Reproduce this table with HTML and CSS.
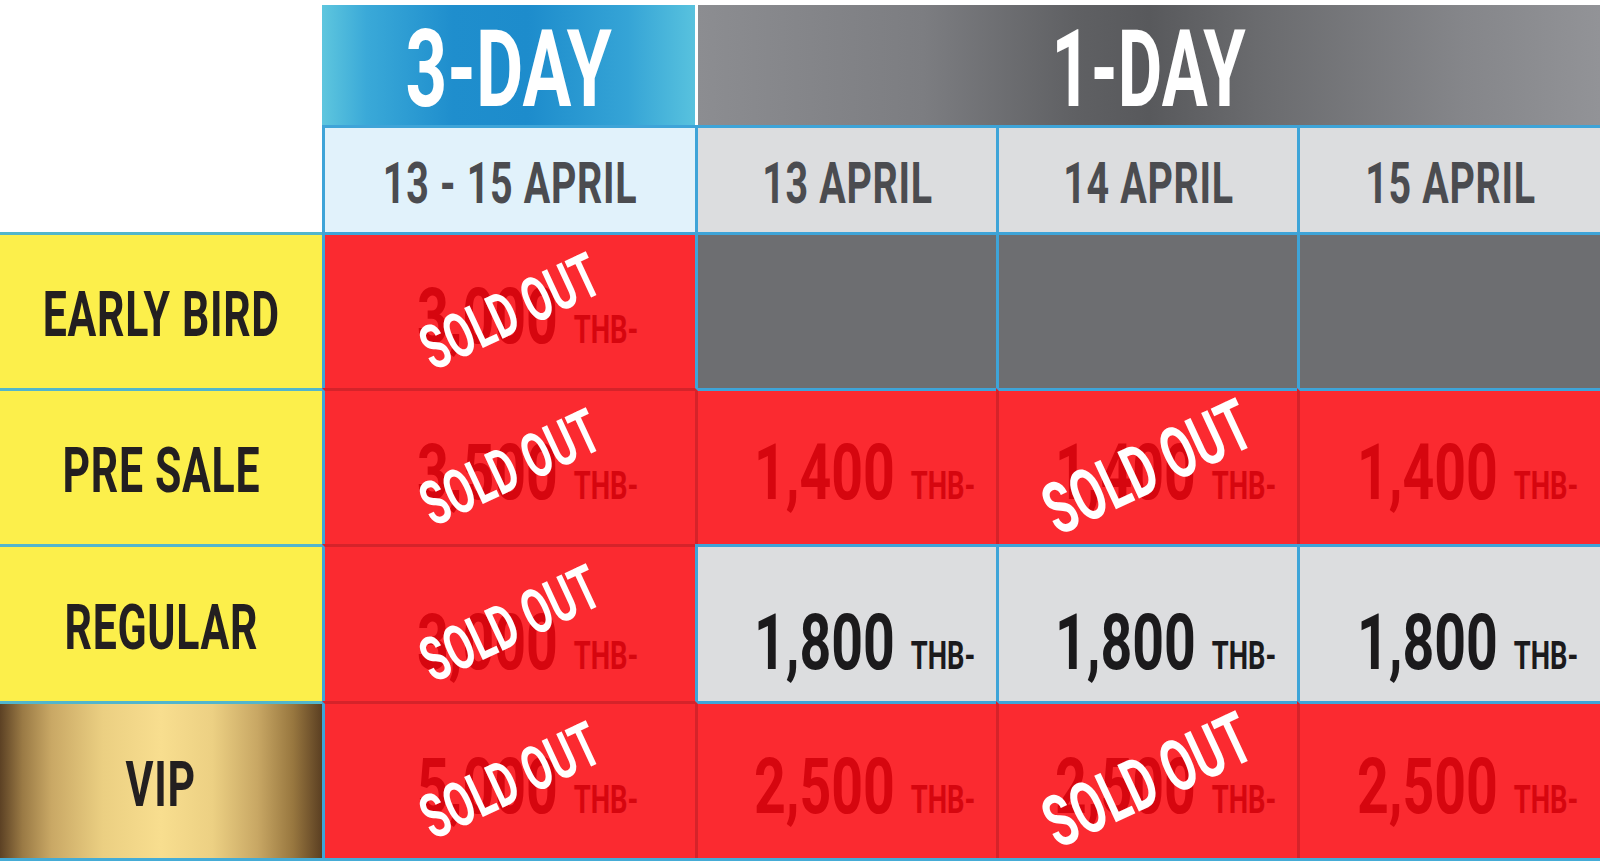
FILE: index.html
```html
<!DOCTYPE html>
<html lang="en">
<head>
  <meta charset="UTF-8">
  <meta name="viewport" content="width=device-width, initial-scale=1.0">
  <title>Ticket Prices</title>
  <link rel="stylesheet" href="styles.css">
</head>
<body>
  <div class="board">
    <!-- header -->
    <div class="corner"></div>
    <div class="head head-three"><span class="sq sq-head">3-DAY</span></div>
    <div class="head head-one"><span class="sq sq-head sq-one">1-DAY</span></div>

    <!-- dates -->
    <div class="corner"></div>
    <div class="date date-three"><span class="sq sq-date">13 - 15 APRIL</span></div>
    <div class="date"><span class="sq sq-date">13 APRIL</span></div>
    <div class="date"><span class="sq sq-date">14 APRIL</span></div>
    <div class="date"><span class="sq sq-date">15 APRIL</span></div>

    <!-- early bird -->
    <div class="label yellow"><span class="sq sq-label">EARLY BIRD</span></div>
    <div class="cell red">
      <span class="price"><span class="amt">3,000</span><span class="thb">THB-</span></span>
      <div class="stamp"><span class="stamp-text">SOLD OUT</span></div>
    </div>
    <div class="cell gray"></div>
    <div class="cell gray"></div>
    <div class="cell gray"></div>

    <!-- pre sale -->
    <div class="label yellow"><span class="sq sq-label">PRE SALE</span></div>
    <div class="cell red jt">
      <span class="price"><span class="amt">3,500</span><span class="thb">THB-</span></span>
      <div class="stamp"><span class="stamp-text">SOLD OUT</span></div>
    </div>
    <div class="cell red jl">
      <span class="price"><span class="amt">1,400</span><span class="thb">THB-</span></span>
    </div>
    <div class="cell red jl">
      <span class="price"><span class="amt">1,400</span><span class="thb">THB-</span></span>
      <div class="stamp"><span class="stamp-text big">SOLD OUT</span></div>
    </div>
    <div class="cell red jl">
      <span class="price"><span class="amt">1,400</span><span class="thb">THB-</span></span>
    </div>

    <!-- regular -->
    <div class="label yellow"><span class="sq sq-label">REGULAR</span></div>
    <div class="cell red jt low">
      <span class="price"><span class="amt">3,000</span><span class="thb">THB-</span></span>
      <div class="stamp"><span class="stamp-text">SOLD OUT</span></div>
    </div>
    <div class="cell light low">
      <span class="price"><span class="amt">1,800</span><span class="thb">THB-</span></span>
    </div>
    <div class="cell light low">
      <span class="price"><span class="amt">1,800</span><span class="thb">THB-</span></span>
    </div>
    <div class="cell light low">
      <span class="price"><span class="amt">1,800</span><span class="thb">THB-</span></span>
    </div>

    <!-- vip -->
    <div class="label gold"><span class="sq sq-label">VIP</span></div>
    <div class="cell red jt">
      <span class="price"><span class="amt">5,000</span><span class="thb">THB-</span></span>
      <div class="stamp"><span class="stamp-text">SOLD OUT</span></div>
    </div>
    <div class="cell red jl">
      <span class="price"><span class="amt">2,500</span><span class="thb">THB-</span></span>
    </div>
    <div class="cell red jl">
      <span class="price"><span class="amt">2,500</span><span class="thb">THB-</span></span>
      <div class="stamp"><span class="stamp-text big">SOLD OUT</span></div>
    </div>
    <div class="cell red jl">
      <span class="price"><span class="amt">2,500</span><span class="thb">THB-</span></span>
    </div>
  </div>
</body>
</html>
```

FILE: styles.css
```css
html, body {
  margin: 0;
  padding: 0;
  background: #ffffff;
}

body {
  padding-top: 5px;
  font-family: Roboto, "Liberation Sans", sans-serif;
  font-weight: 700;
  overflow: hidden;
}

.board {
  display: grid;
  grid-template-columns: 322px 373px 301px 301px 303px;
  grid-template-rows: 120px 107px 156px 156px 157px 157px;
  width: 1600px;
  border-bottom: 3px solid #45acd6;
}

.board > div {
  box-sizing: border-box;
  display: flex;
  align-items: center;
  justify-content: center;
  line-height: 1;
  white-space: nowrap;
}

.sq {
  display: inline-block;
}

/* header */
.head {
  color: #ffffff;
}

.head-three {
  background: linear-gradient(90deg, #5ec6de 0%, #3aa9d8 12%, #1f8ecd 35%, #1d8ccc 55%, #35a4d6 82%, #58c2de 100%);
}

.head-one {
  grid-column: span 3;
  border-left: 3px solid #ffffff;
  background: linear-gradient(90deg, #8c8d91 0%, #7c7d81 25%, #5f6063 42%, #58595c 50%, #6a6b6e 62%, #85868a 85%, #929397 100%);
}

.sq-head {
  font-size: 107px;
  transform: scaleX(0.68);
  padding-top: 8px;
}

.sq-one {
  transform: scaleX(0.64);
}

/* dates */
.date {
  background: #dcdddf;
  color: #4b4c50;
  border-top: 3px solid #3ea4d8;
  border-left: 3px solid #3ea4d8;
}

.date-three {
  background: #e1f2fb;
}

.sq-date {
  font-size: 58px;
  letter-spacing: 1px;
  transform: scaleX(0.68);
  padding-top: 6px;
}

/* row labels */
.label {
  color: #231f20;
  border-top: 3px solid #52b6cc;
}

.yellow {
  background: #fcef4b;
}

.gold {
  background: linear-gradient(90deg, #5c4124 0%, #9a7a45 7%, #c9a865 16%, #ebcf82 32%, #f8de8f 50%, #ecd083 66%, #c8a764 80%, #98773f 91%, #5b3f22 100%);
}

.sq-label {
  font-size: 63px;
  letter-spacing: 1px;
  transform: scaleX(0.68);
  padding-top: 6px;
}

/* price cells */
.cell {
  position: relative;
  border-top: 3px solid #3ea4d8;
  border-left: 3px solid #3ea4d8;
  padding: 12px 0 0 36px;
}

.cell.low {
  padding-top: 38px;
}

.red {
  background: #fb2a30;
  color: #d6060f;
}

.gray {
  background: #6d6e71;
}

.light {
  background: #dcdddf;
  color: #1b1a1c;
}

.jt {
  border-top-color: #d5232a;
}

.jl {
  border-left-color: #d5232a;
}

.price {
  display: inline-block;
  transform: scaleX(0.72);
  white-space: nowrap;
}

.amt {
  font-size: 77px;
}

.thb {
  font-size: 38px;
  margin-left: 22px;
}

/* sold out stamp */
.stamp {
  position: absolute;
  inset: 0;
  display: flex;
  align-items: center;
  justify-content: center;
}

.stamp-text {
  display: inline-block;
  color: #ffffff;
  font-size: 62px;
  transform: rotate(-25deg) scaleX(0.65);
}

.stamp-text.big {
  font-size: 72px;
}
```
